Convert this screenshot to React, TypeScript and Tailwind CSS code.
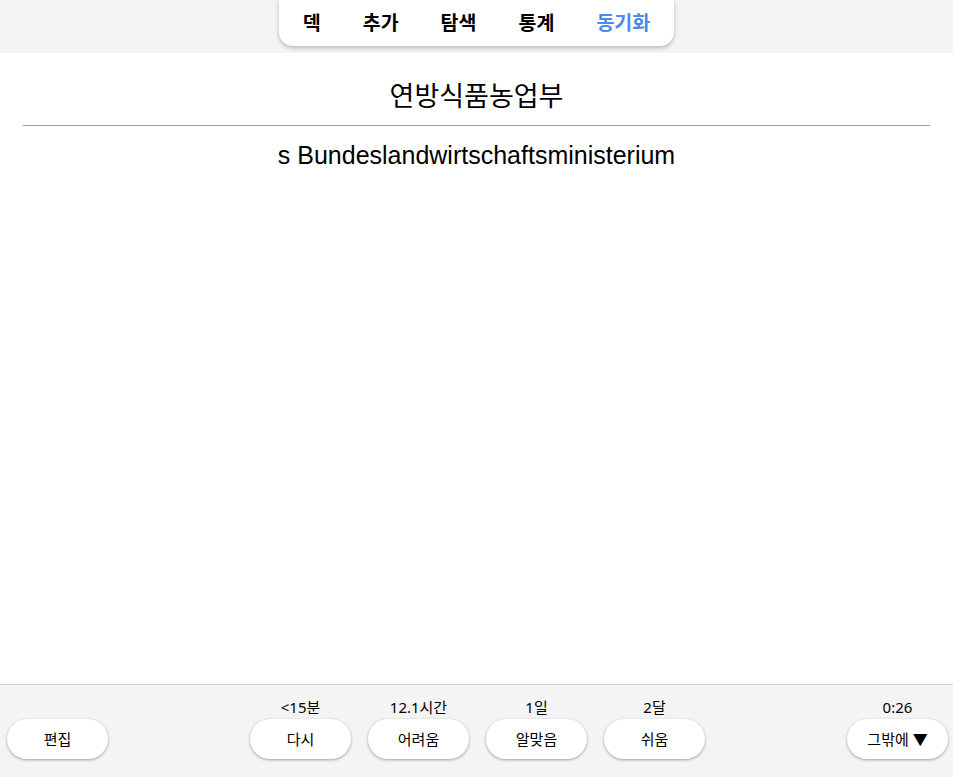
import React from 'react';

const tabs = ['덱', '추가', '탐색', '통계', '동기화'];

interface AnswerButtonProps {
  label: string;
  due?: string;
}

const AnswerButton: React.FC<AnswerButtonProps> = ({ label, due }) => (
  <div className="flex flex-col items-center">
    <div className="h-[20px] mb-[2px] text-[15px] leading-[20px] text-black">{due ?? ''}</div>
    <button className="w-[101px] h-[40px] rounded-full bg-white text-[15px] text-black shadow-[0_1px_3px_rgba(0,0,0,0.35)]">
      {label}
    </button>
  </div>
);

const App: React.FC = () => {
  return (
    <div
      className="w-[953px] h-[777px] flex flex-col bg-white overflow-hidden"
      style={{ fontFamily: '"Noto Sans", "Noto Sans CJK KR", sans-serif' }}
    >
      {/* top navigation */}
      <div className="h-[53px] shrink-0 bg-[#f4f4f4] flex justify-center">
        <nav className="h-[46px] flex items-center gap-[42px] px-6 bg-white rounded-b-[14px] shadow-[0_2px_4px_rgba(0,0,0,0.25)]">
          {tabs.map((t) => (
            <span
              key={t}
              className={
                t === '동기화'
                  ? 'text-[19.5px] font-bold text-[#4a8af0]'
                  : 'text-[19.5px] font-bold text-black'
              }
            >
              {t}
            </span>
          ))}
        </nav>
      </div>

      {/* card */}
      <main
        className="flex-1 flex flex-col items-center text-black"
        style={{ fontFamily: '"Liberation Sans", "Noto Sans CJK KR", sans-serif' }}
      >
        <div className="mt-[27px] text-[27px] leading-[34px]">연방식품농업부</div>
        <hr className="w-[907px] mt-[11px] border-t border-[#a0a0a0]" />
        <div className="mt-[13px] text-[25px] leading-[32px]">s Bundeslandwirtschaftsministerium</div>
      </main>

      {/* answer bar */}
      <div className="h-[93px] shrink-0 bg-[#f4f4f4] border-t border-[#cccccc] flex items-start justify-between pl-[7px] pr-[5px] pt-[12px]">
        <AnswerButton label="편집" />
        <div className="flex gap-[17px]">
          <AnswerButton label="다시" due="<15분" />
          <AnswerButton label="어려움" due="12.1시간" />
          <AnswerButton label="알맞음" due="1일" />
          <AnswerButton label="쉬움" due="2달" />
        </div>
        <AnswerButton label="그밖에 ▼" due="0:26" />
      </div>
    </div>
  );
};

export default App;
